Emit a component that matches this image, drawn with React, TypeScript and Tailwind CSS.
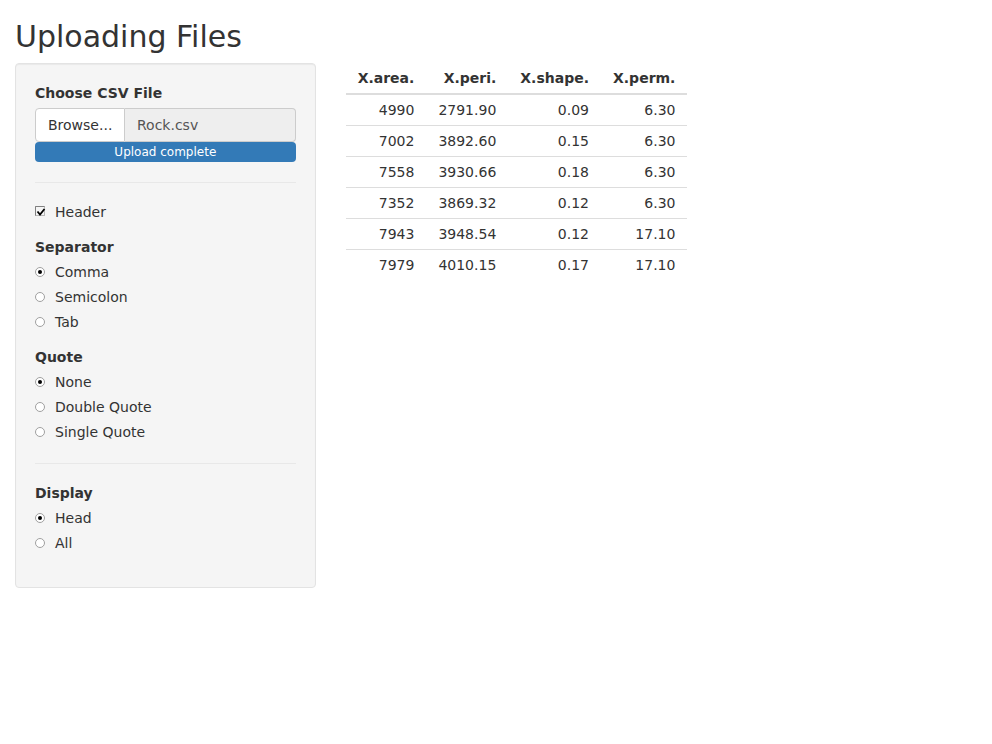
import React from "react";

function Radio({ checked, label }: { checked?: boolean; label: string }) {
  return (
    <div className="flex items-center h-5">
      <span className="relative w-[10px] h-[10px] rounded-full border border-[#a0a0a0] bg-white flex items-center justify-center">
        {checked && <span className="w-[4px] h-[4px] rounded-full bg-black" />}
      </span>
      <span className="ml-[10px]">{label}</span>
    </div>
  );
}

const rows = [
  ["4990", "2791.90", "0.09", "6.30"],
  ["7002", "3892.60", "0.15", "6.30"],
  ["7558", "3930.66", "0.18", "6.30"],
  ["7352", "3869.32", "0.12", "6.30"],
  ["7943", "3948.54", "0.12", "17.10"],
  ["7979", "4010.15", "0.17", "17.10"],
];

export default function App() {
  return (
    <div
      className="min-h-[744px] bg-white text-[#333] text-[14px] leading-5 px-[15px]"
      style={{ fontFamily: '"DejaVu Sans", Verdana, sans-serif' }}
    >
      <h2 className="text-[30px] leading-[33px] font-normal mt-[20px] mb-[10px]">Uploading Files</h2>
      <div className="flex">
        <div className="w-[315.67px] pr-[15px] shrink-0">
          <div className="bg-[#f5f5f5] border border-[#e3e3e3] rounded-[4px] p-[19px] shadow-[inset_0_1px_1px_rgba(0,0,0,0.05)]">
            <div className="font-bold mb-[5px]">Choose CSV File</div>
            <div className="flex h-[34px]">
              <div className="w-[90px] shrink-0 bg-white border border-[#ccc] rounded-l-[4px] flex items-center pl-[12px]">
                Browse...
              </div>
              <div className="flex-1 bg-[#eee] border border-l-0 border-[#ccc] rounded-r-[4px] flex items-center pl-[12px] text-[#555]">
                Rock.csv
              </div>
            </div>
            <div className="h-[20px] bg-[#337ab7] rounded-[4px] text-white text-[12px] leading-[20px] text-center">
              Upload complete
            </div>
            <div className="mt-[20px] border-t border-[#e8e8e8]" />
            <div className="mt-[19px] flex items-center h-5">
              <svg width="12" height="12" viewBox="0 0 12 12" className="-mt-[1px]">
                <rect x="0.5" y="0.5" width="9" height="9" fill="none" stroke="#b8b8b8" strokeWidth="1" />
                <path d="M0.5 9.5 V0.5 H9.5" fill="none" stroke="#808080" strokeWidth="1" />
                <path d="M2.5 5.5 L5 8.5 L9.5 3" fill="none" stroke="#000" strokeWidth="1.8" />
              </svg>
              <span className="ml-[8px]">Header</span>
            </div>
            <div className="mt-[15px] font-bold mb-[5px]">Separator</div>
            <div className="flex flex-col gap-[5px]">
              <Radio checked label="Comma" />
              <Radio label="Semicolon" />
              <Radio label="Tab" />
            </div>
            <div className="mt-[15px] font-bold mb-[5px]">Quote</div>
            <div className="flex flex-col gap-[5px]">
              <Radio checked label="None" />
              <Radio label="Double Quote" />
              <Radio label="Single Quote" />
            </div>
            <div className="mt-[21px] border-t border-[#e8e8e8]" />
            <div className="mt-[19px] font-bold mb-[5px]">Display</div>
            <div className="flex flex-col gap-[5px]">
              <Radio checked label="Head" />
              <Radio label="All" />
            </div>
            <div className="h-[15px]" />
          </div>
        </div>
        <div className="pl-[15px]">
          <table className="border-collapse">
            <thead>
              <tr>
                {["X.area.", "X.peri.", "X.shape.", "X.perm."].map((h) => (
                  <th key={h} className="text-right font-bold px-[12px] py-[5px] border-b-2 border-[#ddd]">
                    {h}
                  </th>
                ))}
              </tr>
            </thead>
            <tbody>
              {rows.map((r, i) => (
                <tr key={i}>
                  {r.map((c, j) => (
                    <td
                      key={j}
                      className={`text-right px-[12px] py-[5px] ${i > 0 ? "border-t border-[#ddd]" : ""}`}
                    >
                      {c}
                    </td>
                  ))}
                </tr>
              ))}
            </tbody>
          </table>
        </div>
      </div>
    </div>
  );
}
